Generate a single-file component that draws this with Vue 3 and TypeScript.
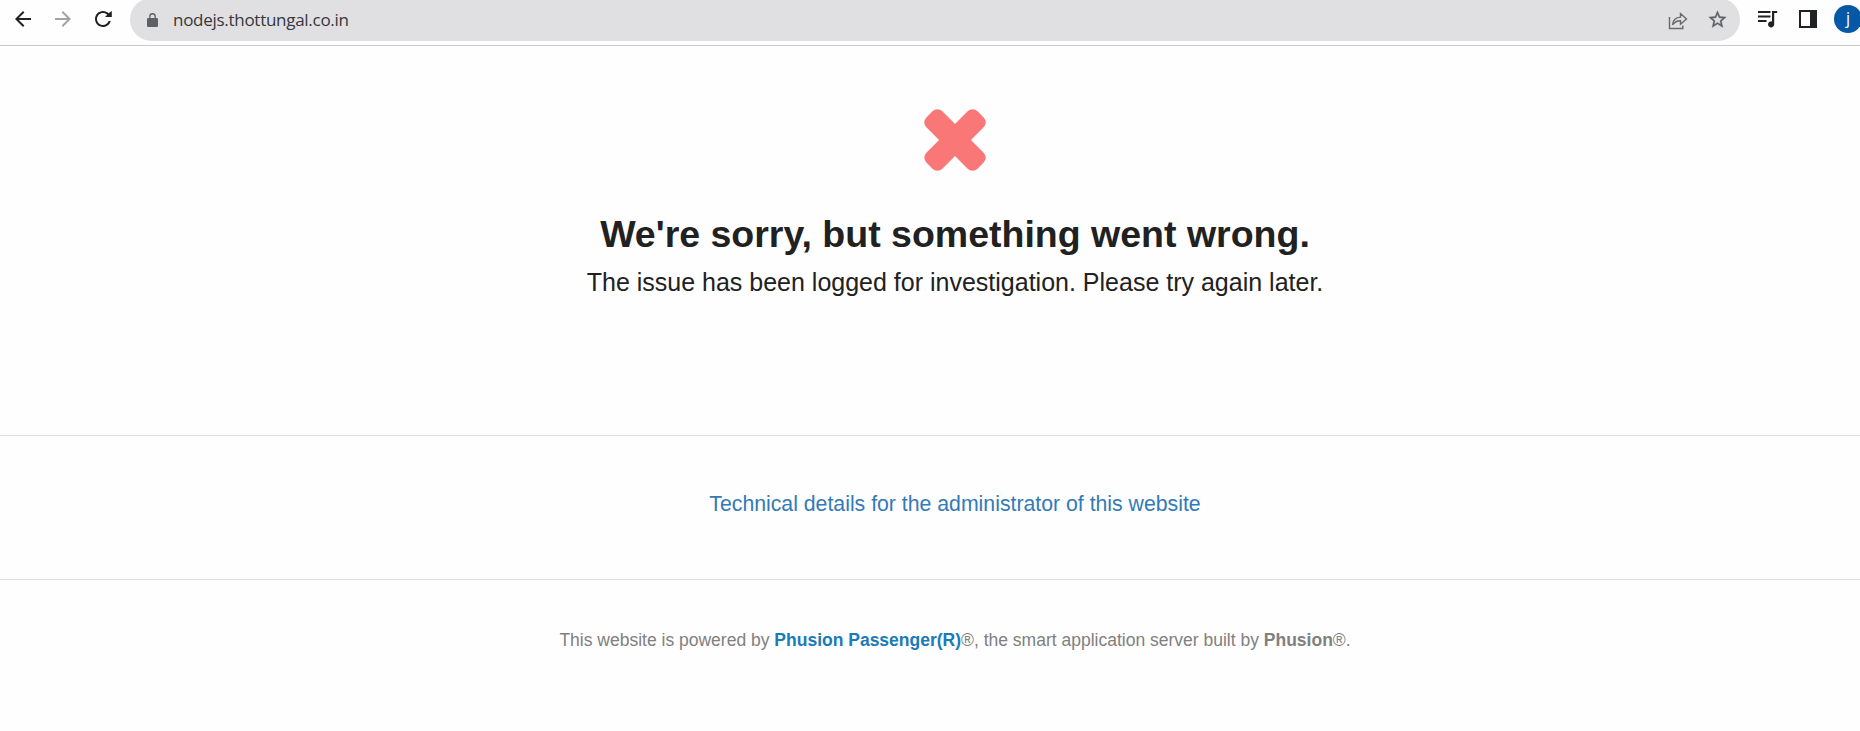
<script setup lang="ts">
const address = 'nodejs.thottungal.co.in'
const profileInitial = 'j'
</script>

<template>
  <div class="window">
    <header class="toolbar">
      <nav class="nav">
        <svg class="icon" viewBox="0 0 24 24"><path d="M20 11H7.83l5.59-5.59L12 4l-8 8 8 8 1.41-1.41L7.83 13H20v-2z" /></svg>
        <svg class="icon muted" viewBox="0 0 24 24"><path d="M4 11h12.17l-5.59-5.59L12 4l8 8-8 8-1.41-1.41L16.17 13H4v-2z" /></svg>
        <svg class="icon" viewBox="0 0 24 24"><path d="M17.65 6.35C16.2 4.9 14.21 4 12 4c-4.42 0-7.99 3.58-7.99 8s3.57 8 7.99 8c3.73 0 6.84-2.55 7.73-6h-2.08c-.82 2.33-3.04 4-5.65 4-3.31 0-6-2.69-6-6s2.69-6 6-6c1.66 0 3.14.69 4.22 1.78L14 10h6.8V4l-3.150 2.350z" /></svg>
      </nav>
      <div class="omnibox">
        <svg class="lock" viewBox="0 0 11 14"><path d="M1.3 5h.9V3.4a3.3 3.3 0 0 1 6.6 0V5h.9A1.3 1.3 0 0 1 11 6.3v6.4a1.3 1.3 0 0 1-1.3 1.3H1.3A1.3 1.3 0 0 1 0 12.7V6.3A1.3 1.3 0 0 1 1.3 5zM3.5 5h4V3.4a2 2 0 0 0-4 0z" /></svg>
        <span class="address">{{ address }}</span>
        <svg class="share" viewBox="0 0 20 18"><path d="M1.500 5v11.500h13.300v-3M4.500 12.800c.5-4.900 3.200-7.500 8-7.700V1.600l6 5.400-6 5.200V8.700c-3.700 0-6 1.200-8 4.100z" /></svg>
        <svg class="star" viewBox="0 0 24 24"><path d="M22 9.24l-7.19-.62L12 2 9.190 8.630 2 9.240l5.460 4.730L5.820 21 12 17.270 18.180 21l-1.630-7.030L22 9.240zM12 15.400l-3.760 2.270 1-4.280-3.320-2.880 4.380-.38L12 6.100l1.710 4.040 4.380.38-3.320 2.880 1 4.280L12 15.400z" /></svg>
      </div>
      <div class="actions">
        <svg class="media" viewBox="0 0 20 18"><path d="M0 1h12.500v1.900H0zM0 5.500h12.500v1.900H0zM0 10h8.500v1.900H0zM14 1h5.200v2h-3v11.200a3.100 3.100 0 1 1-2.200-2.800z" /></svg>
        <svg class="panel" viewBox="0 0 18 18"><path fill-rule="evenodd" d="M0 0h18v18H0zM2 2v14h9V2z" /></svg>
        <span class="avatar">{{ profileInitial }}</span>
      </div>
    </header>

    <main class="page">
      <section class="message">
        <svg class="cross" viewBox="-31 -31 62 62">
          <g transform="rotate(45)">
            <rect x="-36.200" y="-11.300" width="72.400" height="22.600" rx="7" />
            <rect x="-11.300" y="-36.200" width="22.600" height="72.400" rx="7" />
          </g>
        </svg>
        <h1>We're sorry, but something went wrong.</h1>
        <p>The issue has been logged for investigation. Please try again later.</p>
      </section>
      <section class="details">
        <a>Technical details for the administrator of this website</a>
      </section>
      <footer>
        <span>This website is powered by <b class="product">Phusion Passenger(R)</b>®, the smart application server built by <b>Phusion</b>®.</span>
      </footer>
    </main>
  </div>
</template>

<style>
body {
  margin: 0;
  background: #fefefe;
}
</style>

<style scoped>
.window {
  box-sizing: border-box;
  width: 100%;
  height: 731px;
  overflow: hidden;
  background: #fefefe;
  font-family: "Liberation Sans", Arial, sans-serif;
}
.toolbar {
  box-sizing: border-box;
  display: flex;
  width: 1860px;
  height: 46px;
  border-bottom: 1px solid #c8c9cb;
  overflow: hidden;
}
.nav {
  display: flex;
  flex: none;
  box-sizing: border-box;
  width: 130px;
  gap: 16px;
  padding: 6.5px 0 0 10.5px;
}
.icon {
  flex: none;
  width: 24px;
  height: 24px;
  fill: #202124;
}
.muted {
  fill: #a3a3a5;
}
.omnibox {
  box-sizing: border-box;
  display: flex;
  align-items: center;
  flex: none;
  width: 1610px;
  height: 43px;
  margin-top: -2px;
  padding: 0 12px 0 17px;
  border-radius: 22px;
  background: #e0e0e3;
}
.lock {
  width: 11px;
  height: 14px;
  margin-top: 1px;
  fill: #5f6063;
}
.address {
  flex: 1;
  margin-left: 15px;
  font: 17px/24px "Open Sans", "Noto Sans", sans-serif;
  letter-spacing: -0.28px;
  color: #36373a;
}
.share {
  width: 20px;
  height: 18px;
  margin: 2px 19px 0 0;
  fill: none;
  stroke: #69696c;
  stroke-width: 1.4;
}
.star {
  width: 21px;
  height: 21px;
  fill: #5f6063;
  stroke: #5f6063;
  stroke-width: 0.4;
}
.actions {
  display: flex;
  flex: none;
  padding-left: 18px;
}
.media {
  width: 20px;
  height: 18px;
  margin-top: 10px;
  fill: #202124;
}
.panel {
  width: 18px;
  height: 18px;
  margin: 10px 17px 0 21px;
  fill: #202124;
}
.avatar {
  flex: none;
  width: 28px;
  height: 28px;
  margin-top: 5px;
  border-radius: 50%;
  background: #0558a5;
  color: #fff;
  font: 16px/27px "Open Sans", sans-serif;
  text-align: center;
}
.page {
  width: 1910px;
  text-align: center;
  white-space: nowrap;
}
.message {
  box-sizing: border-box;
  height: 390px;
  padding-top: 63px;
  border-bottom: 1px solid #dfdfdf;
}
.cross {
  display: block;
  width: 62px;
  height: 62px;
  margin: 0 auto;
  fill: #fa7777;
}
h1 {
  margin: 39px 0 0;
  font-size: 37.5px;
  line-height: 48px;
  color: #212121;
}
p {
  margin: 8px 0 0;
  font-size: 25px;
  line-height: 32px;
  color: #212121;
}
.details {
  box-sizing: border-box;
  height: 144px;
  padding-top: 54px;
  border-bottom: 1px solid #dfdfdf;
  font-size: 21.25px;
  line-height: 28px;
  color: #337ab7;
}
footer {
  padding-top: 48px;
  font-size: 17.5px;
  line-height: 24px;
  color: #808080;
}
.product {
  color: #1b7ab8;
}
</style>
